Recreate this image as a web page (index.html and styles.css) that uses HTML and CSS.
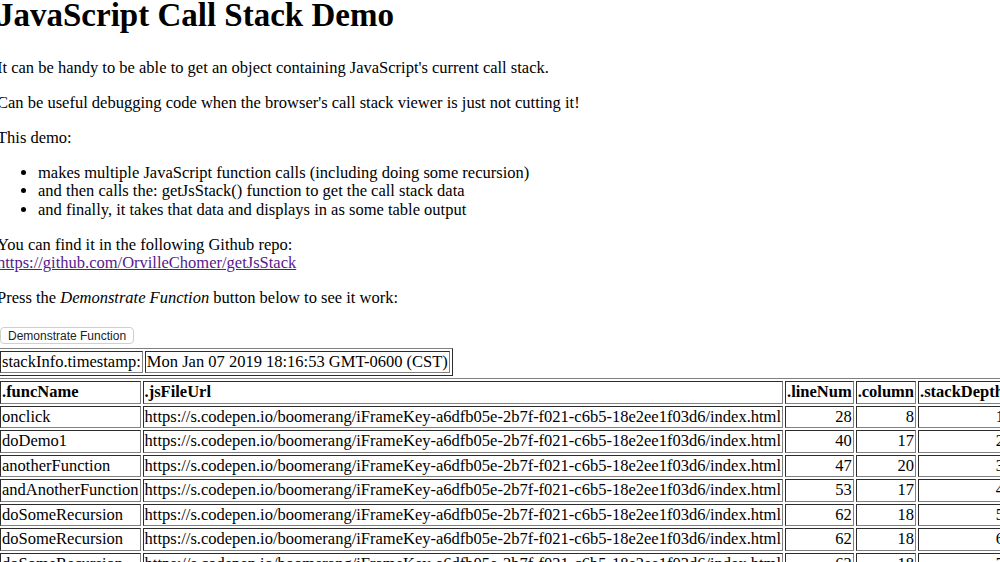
FILE: index.html
```html
<!DOCTYPE html>
<html>
<head>
<meta charset="utf-8">
<title>JavaScript Call Stack Demo</title>
<link rel="stylesheet" href="styles.css">
</head>
<body>
<div class="page">
<h1>JavaScript Call Stack Demo</h1>
<p>It can be handy to be able to get an object containing JavaScript's current call stack.</p>
<p>Can be useful debugging code when the browser's call stack viewer is just not cutting it!</p>
<p>This demo:</p>
<ul>
<li>makes multiple JavaScript function calls (including doing some recursion)</li>
<li>and then calls the: getJsStack() function to get the call stack data</li>
<li>and finally, it takes that data and displays in as some table output</li>
</ul>
<p>You can find it in the following Github repo:<br><a href="#">https://github.com/OrvilleChomer/getJsStack</a></p>
<p>Press the <i>Demonstrate Function</i> button below to see it work:</p>
<button class="demo-btn">Demonstrate Function</button>
<table class="info" border="1">
<tr><td>stackInfo.timestamp:</td><td>Mon Jan 07 2019 18:16:53 GMT-0600 (CST)</td></tr>
</table>
<table class="stack" border="1">
<tr><th>.funcName</th><th>.jsFileUrl</th><th>.lineNum</th><th>.column</th><th>.stackDepth</th></tr>
<tr><td>onclick</td><td>https://s.codepen.io/boomerang/iFrameKey-a6dfb05e-2b7f-f021-c6b5-18e2ee1f03d6/index.html</td><td class="num">28</td><td class="num">8</td><td class="num">1</td></tr>
<tr><td>doDemo1</td><td>https://s.codepen.io/boomerang/iFrameKey-a6dfb05e-2b7f-f021-c6b5-18e2ee1f03d6/index.html</td><td class="num">40</td><td class="num">17</td><td class="num">2</td></tr>
<tr><td>anotherFunction</td><td>https://s.codepen.io/boomerang/iFrameKey-a6dfb05e-2b7f-f021-c6b5-18e2ee1f03d6/index.html</td><td class="num">47</td><td class="num">20</td><td class="num">3</td></tr>
<tr><td>andAnotherFunction</td><td>https://s.codepen.io/boomerang/iFrameKey-a6dfb05e-2b7f-f021-c6b5-18e2ee1f03d6/index.html</td><td class="num">53</td><td class="num">17</td><td class="num">4</td></tr>
<tr><td>doSomeRecursion</td><td>https://s.codepen.io/boomerang/iFrameKey-a6dfb05e-2b7f-f021-c6b5-18e2ee1f03d6/index.html</td><td class="num">62</td><td class="num">18</td><td class="num">5</td></tr>
<tr><td>doSomeRecursion</td><td>https://s.codepen.io/boomerang/iFrameKey-a6dfb05e-2b7f-f021-c6b5-18e2ee1f03d6/index.html</td><td class="num">62</td><td class="num">18</td><td class="num">6</td></tr>
<tr><td>doSomeRecursion</td><td>https://s.codepen.io/boomerang/iFrameKey-a6dfb05e-2b7f-f021-c6b5-18e2ee1f03d6/index.html</td><td class="num">62</td><td class="num">18</td><td class="num">7</td></tr>
</table>
</div>
</body>
</html>
```
FILE: styles.css
```css
html, body {
  margin: 0;
  padding: 0;
  background: #fff;
  overflow: hidden;
}
body {
  font-family: "Liberation Serif", "Times New Roman", serif;
  font-size: 16.5px;
  line-height: 18.5px;
  color: #000;
}
.page {
  margin-left: -3px;
  width: 1100px;
}
h1 {
  font-size: 33px;
  line-height: 37.5px;
  font-weight: bold;
  margin: -3px 0 24px;
}
p {
  margin: 16.5px 0;
}
ul {
  margin: 16.5px 0;
  padding-left: 41px;
}
a {
  color: #551a8b;
  text-decoration: underline;
}
.demo-btn {
  display: block;
  margin: 19px 0 4px 3px;
  font-family: "Liberation Sans", Arial, sans-serif;
  font-size: 12px;
  line-height: 14px;
  color: #222;
  background: #fff;
  border: 1px solid #cfcfcf;
  border-radius: 4px;
  padding: 1px 7px 0;
  height: 17px;
  white-space: nowrap;
}
table {
  border-collapse: separate;
  border-spacing: 2px;
  border: 1px outset #808080;
}
td, th {
  border: 1px inset #808080;
  padding: 1px;
  text-align: left;
  white-space: nowrap;
}
.info {
  margin-bottom: 2px;
}
th {
  font-weight: bold;
}
td.num {
  text-align: right;
}
```
